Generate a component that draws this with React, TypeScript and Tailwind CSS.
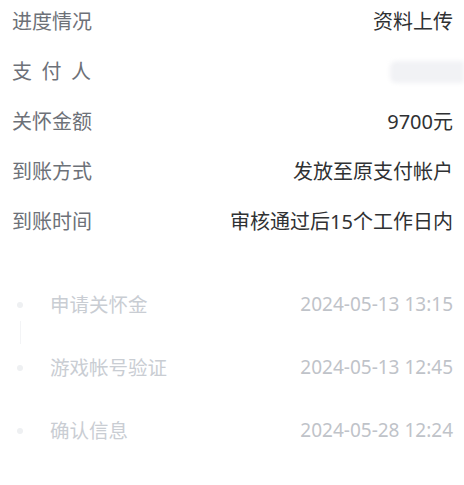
const info = [
  { label: "进度情况", value: "资料上传" },
  { label: "支付人", value: null },
  { label: "关怀金额", value: "9700元" },
  { label: "到账方式", value: "发放至原支付帐户" },
  { label: "到账时间", value: "审核通过后15个工作日内" },
];

const steps = [
  { title: "申请关怀金", time: "2024-05-13 13:15" },
  { title: "游戏帐号验证", time: "2024-05-13 12:45" },
  { title: "确认信息", time: "2024-05-28 12:24" },
];

export default function App() {
  return (
    <div
      className="w-[464px] h-[485px] overflow-hidden bg-white"
      style={{ fontFamily: '"Noto Sans", "Noto Sans CJK SC", sans-serif' }}
    >
      <div className="-mt-[3px] flex flex-col pl-[12px] pr-[11px]">
        {info.map((row) => (
          <div key={row.label} className="flex h-[50px] items-center justify-between text-[20px]">
            {row.value ? (
              <span className="text-[#6d7178]">{row.label}</span>
            ) : (
              <span className="flex w-[79px] justify-between text-[#6d7178]">
                {row.label.split("").map((c) => (
                  <span key={c}>{c}</span>
                ))}
              </span>
            )}
            {row.value ? (
              <span className="text-[#2f3133]">{row.value}</span>
            ) : (
              <div className="-mr-[11px] h-[22px] w-[74px] rounded-l-[6px] bg-[#f1f2f5] blur-[2px]" />
            )}
          </div>
        ))}
      </div>

      <div className="mt-[26px] flex flex-col pl-[17px] pr-[11px]">
        {steps.map((s, i) => (
          <div key={s.title} className="relative flex h-[63px] items-center">
            <div className="flex w-[33px] shrink-0">
              <span className="h-[6px] w-[6px] rounded-full bg-[#eef0f2]" />
            </div>
            {i === 0 && (
              <span className="absolute left-[2.5px] top-[48px] h-[23px] w-px bg-[#f3f4f6]" />
            )}
            <span className="flex-1 text-[19.5px] text-[#c9cdd3]">{s.title}</span>
            <span className="text-[19px] text-[#bfc3c9]">{s.time}</span>
          </div>
        ))}
      </div>
    </div>
  );
}
